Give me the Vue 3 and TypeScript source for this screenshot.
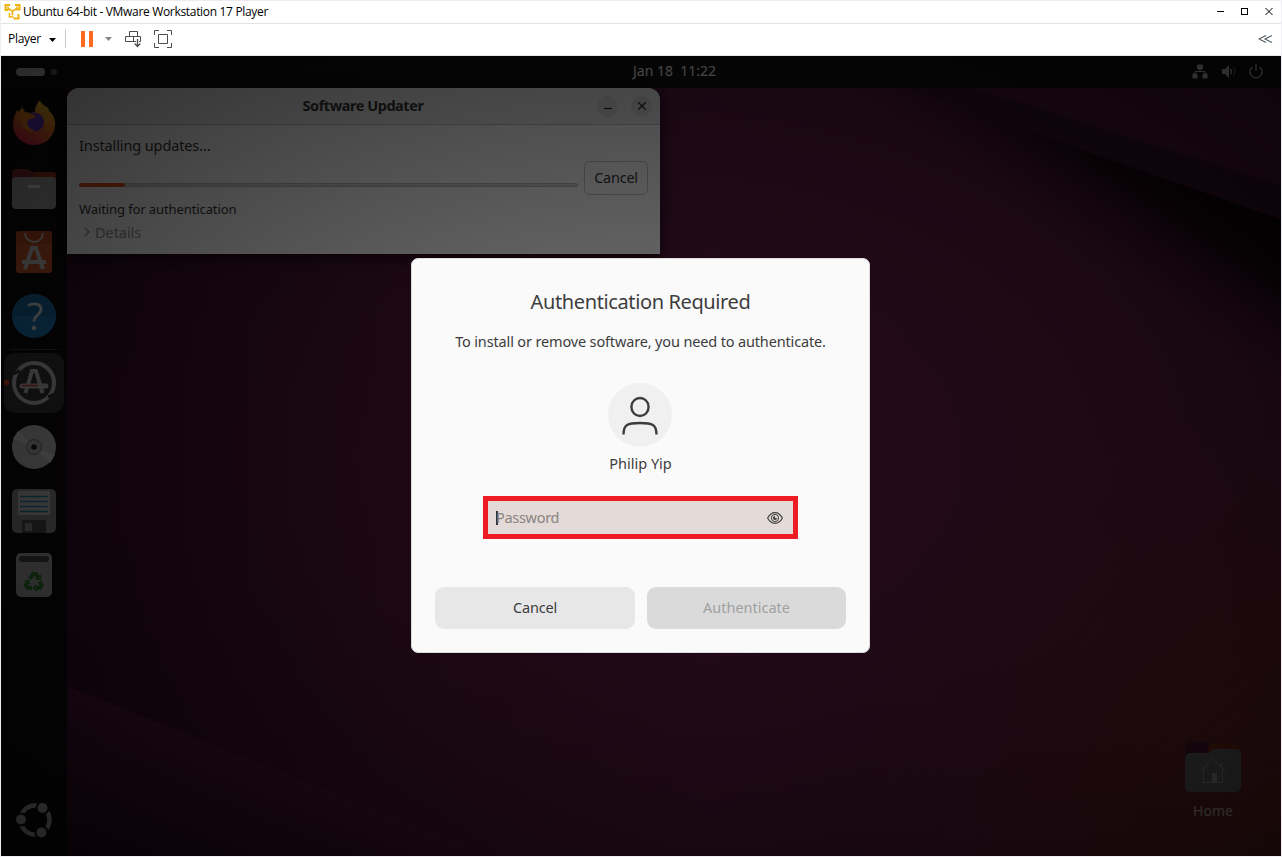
<script setup lang="ts">
interface DockItem {
  id: string
  active?: boolean
}
const pinned: DockItem[] = [{ id: 'firefox' }, { id: 'files' }, { id: 'store' }, { id: 'help' }]
const running: DockItem[] = [{ id: 'updater', active: true }, { id: 'disc' }, { id: 'floppy' }, { id: 'trash' }]
const progress = 9.2
</script>

<template>
  <div class="vm">
    <header class="titlebar">
      <svg class="logo" width="17" height="17" viewBox="0 0 17 17" fill="none" stroke="#efb310" stroke-width="2">
        <path d="M6 2H1.500v5H4M11 2h4.500v4.500H13M9.500 15.500h5V11" />
        <path d="M3.500 4.800L7 7.500h3l3.500-3M8.500 7.500v5M5.500 10v4h4M4 3.500v3h2.500M13 3.500v3h-2.500" stroke-width="1.600" />
      </svg>
      <span class="caption">Ubuntu 64-bit - VMware Workstation 17 Player</span>
      <svg class="controls" width="54" height="9" viewBox="0 0 54 9" fill="none" stroke="#000" shape-rendering="crispEdges">
        <path d="M0 4.500h7M24.500 1.500h6v6h-6z" />
        <path d="M48.500 1l7 7M55.500 1l-7 7" shape-rendering="auto" />
      </svg>
    </header>

    <div class="toolbar">
      <span class="player">Player</span>
      <svg class="caret" width="7" height="4" viewBox="0 0 7 4"><path d="M0 0h7L3.500 4z" fill="#000" /></svg>
      <i class="divider"></i>
      <svg class="pause" width="12" height="16" viewBox="0 0 12 16"><path d="M0 0h4v16H0zM8 0h4v16H8z" fill="#ff6a1f" /></svg>
      <svg class="caret2" width="7" height="4" viewBox="0 0 7 4"><path d="M0 0h7L3.500 4z" fill="#888" /></svg>
      <svg class="cad" width="18" height="18" viewBox="0 0 18 18" fill="none" stroke="#4c4c4c">
        <path d="M4.500 6.500v-5h8v5M.5 6.500h15v5M9.500 11.500H.5v-5M8.500 6.500v5M9 11.500h2M14 11.500h1.500" />
        <path d="M12.500 9v7.500M9.700 13.500l2.800 3 2.800-3" stroke-width="1.300" />
      </svg>
      <svg class="full" width="18" height="18" viewBox="0 0 18 18" fill="none" stroke="#4c4c4c">
        <path d="M.5 5V.5H5M13 .5h4.500V5M17.500 13v4.500H13M5 17.500H.5V13M4.500 4.500h9v9h-9z" />
      </svg>
      <svg class="chev" width="15" height="8" viewBox="0 0 15 8" fill="none" stroke="#4f5a62" stroke-width="1.100">
        <path d="M8 .5L1 4l7 3.500M14 .5L7 4l7 3.500" />
      </svg>
    </div>

    <main class="desktop">
      <svg class="wallpaper" width="1280" height="800" viewBox="0 0 1280 800" preserveAspectRatio="none">
        <defs>
          <linearGradient id="base" x1="0" y1="0" x2="1" y2="0">
            <stop offset="0" stop-color="#2b0820" /><stop offset=".3" stop-color="#47142f" />
            <stop offset=".55" stop-color="#55183d" /><stop offset="1" stop-color="#541838" />
          </linearGradient>
          <radialGradient id="warm" gradientUnits="userSpaceOnUse" cx="1280" cy="760" r="420">
            <stop offset="0" stop-color="#8a3018" stop-opacity=".6" /><stop offset="1" stop-color="#7a2824" stop-opacity="0" />
          </radialGradient>
          <linearGradient id="foldTop" gradientUnits="userSpaceOnUse" x1="1150" y1="80" x2="1070" y2="197">
            <stop offset="0" stop-color="#0c0206" /><stop offset=".35" stop-color="#14040c" stop-opacity=".9" /><stop offset="1" stop-color="#4a1531" stop-opacity="0" />
          </linearGradient>
          <linearGradient id="foldLow" gradientUnits="userSpaceOnUse" x1="276" y1="714" x2="220" y2="850">
            <stop offset="0" stop-color="#4b1437" /><stop offset="1" stop-color="#260a1c" />
          </linearGradient>
        </defs>
        <rect width="1280" height="800" fill="url(#base)" />
        <rect width="1280" height="800" fill="url(#warm)" />
        <path d="M840 32H904L1280 163V350z" fill="url(#foldTop)" />
        <path d="M904 32H1280V163z" fill="#35102a" />
        <path d="M972 32h308v97z" fill="#4a1632" />
        <path d="M66 630L489 800H66z" fill="url(#foldLow)" />
      </svg>

      <nav class="topbar">
        <i class="pill"></i><i class="dot"></i>
        <span class="clock">Jan 18&nbsp; 11:22</span>
        <svg class="tray" width="72" height="16" viewBox="0 0 72 16" fill="none" stroke="#ddd">
          <path d="M5.500 1h5v4h-5zM1 10h4v4H1zM11 10h4v4h-4z" fill="#ddd" />
          <path d="M8 5v3M3 11V7.500h10V11" />
          <path d="M30 5h3l4-4v13l-4-4h-3z" fill="#ddd" stroke="none" />
          <path d="M38.500 5q2 2.500 0 5" stroke-width="1.300" /><path d="M41 3q4 4.500 0 9" opacity=".6" />
          <path d="M60.500 3a6 6 0 1 0 7 0M64 0v7" stroke-width="1.400" />
        </svg>
      </nav>

      <aside class="dock">
        <template v-for="(group, g) in [pinned, running]" :key="g">
          <div v-if="g === 1" class="sep"></div>
          <div v-for="item in group" :key="item.id" class="slot">
            <div class="tile" :class="{ active: item.active }">
              <svg width="46" height="46" viewBox="0 0 46 46">
                <template v-if="item.id === 'firefox'">
                  <defs>
                    <linearGradient id="fx" x1=".8" y1="0" x2=".3" y2="1">
                      <stop offset="0" stop-color="#ffd83a" /><stop offset=".45" stop-color="#ff8a20" /><stop offset="1" stop-color="#e3204f" />
                    </linearGradient>
                  </defs>
                  <g transform="translate(0 -1)">
                    <path d="M29 0c1 4 5 6 8 8l1 3c4 3 7 9 6 15-1 11-10 19-21 19S2 36 2 25c0-6 2-11 4-15l2 2 3-5 3 5 6 1 4-1c0-5 2-9 5-12z" fill="url(#fx)" />
                    <circle cx="23.500" cy="22" r="9.500" fill="#6a35c9" />
                    <path d="M9 15c6-2 11-2 16 1-2 3-5 2-8 4-2 4 1 10 7 10-7 4-15-2-15-15z" fill="#ff8a20" />
                  </g>
                </template>
                <template v-else-if="item.id === 'files'">
                  <path d="M1 8a4 4 0 0 1 4-4h12l5 3h19a4 4 0 0 1 4 4v8H1z" fill="#8a2a2c" />
                  <path d="M24 7h17a4 4 0 0 1 4 4v8H22z" fill="#a5361b" />
                  <rect x="1" y="12" width="44" height="32" rx="4" fill="#a6a6a6" /><rect x="17" y="20" width="12" height="3" rx="1.500" fill="#eee" />
                </template>
                <template v-else-if="item.id === 'store'">
                  <rect x="5" y="2" width="36" height="42" rx="3" fill="#d0562a" /><path d="M5 5a3 3 0 0 1 3-3h30a3 3 0 0 1 3 3v10H5z" fill="#bf4a20" />
                  <path d="M14 4a9 9 0 0 0 18 0" fill="none" stroke="#ccc" stroke-width="1.800" />
                  <path d="M14 40l7-21h4l7 21M11 33h24" fill="none" stroke="#ccc" stroke-width="4" />
                </template>
                <template v-else-if="item.id === 'help'">
                  <circle cx="23" cy="23" r="22" fill="#1d78b8" /><path d="M1 23a22 22 0 0 1 44 0z" fill="#1769a4" />
                  <path d="M17 12.500c5-2.500 13-2.500 13 3.500s-7 6-7 12.500" fill="none" stroke="#dcdcdc" stroke-width="2.800" /><circle cx="23" cy="35" r="2.300" fill="#dcdcdc" />
                </template>
                <template v-else-if="item.id === 'updater'">
                  <circle cx="23" cy="23" r="20" fill="#343434" stroke="#bdbdbd" stroke-width="4" />
                  <path d="M3 14l6 -3.500M37 37l7-3" stroke="#333" stroke-width="3" />
                  <path d="M14.500 33l6.500-22h4l6.500 22" fill="none" stroke="#bdbdbd" stroke-width="4" />
                  <path d="M11 26h24" stroke="#bdbdbd" stroke-width="5" stroke-linecap="round" /><path d="M11 25.500h16" stroke="#c63a35" stroke-width="1.500" />
                </template>
                <template v-else-if="item.id === 'disc'">
                  <circle cx="23" cy="23" r="22" fill="#b8b8b8" /><path d="M23 23L2 15l5-8zM23 23l21 8-5 8z" fill="#cdcdcd" />
                  <circle cx="23" cy="23" r="7.500" fill="#b1ada6" stroke="#77736b" /><circle cx="23" cy="23" r="3.500" fill="#222" stroke="#ccc" stroke-width="1" />
                </template>
                <template v-else-if="item.id === 'floppy'">
                  <rect x="1" y="1" width="44" height="44" rx="5" fill="#858585" /><rect x="7" y="3" width="32" height="24" rx="1" fill="#bbb" />
                  <path d="M9 8.500h28M9 13.500h28M9 18.500h28M9 23.500h28" stroke="#217b9a" stroke-width="1.300" />
                  <path d="M11 45V33a1 1 0 0 1 1-1h22a1 1 0 0 1 1 1v12z" fill="#494949" /><rect x="14" y="35" width="7" height="8" fill="#8c8c8c" />
                </template>
                <template v-else>
                  <rect x="5" y="1" width="36" height="44" rx="5" fill="#a0a0a0" /><rect x="8" y="4" width="30" height="6" rx="3" fill="#474747" />
                  <g fill="none" stroke="#2c7a2c" stroke-width="4">
                    <path d="M19 27l3-5h3l2.500 4" /><path d="M28.500 29.500l2 3.500-1.500 3h-4.500M21 36h-4.500l-1.500-3 2-3.500" />
                    <path d="M29.500 23v4H25M25.500 33l-3 3 3 3M14 29.500l3.500-.8 1 3.500" stroke-width="1.800" />
                  </g>
                </template>
              </svg>
            </div>
          </div>
        </template>
        <svg class="ubuntu" width="40" height="40" viewBox="0 0 40 40">
          <circle cx="20" cy="20" r="14.500" fill="none" stroke="#b9b9b9" stroke-width="4.500" />
          <g fill="#b9b9b9" stroke="#0f0a0d" stroke-width="2">
            <circle cx="6" cy="19.500" r="6" /><circle cx="27.500" cy="8" r="6" /><circle cx="26.500" cy="32.500" r="6" />
          </g>
        </svg>
      </aside>

      <section class="window">
        <div class="whead">
          <h1>Software Updater</h1>
          <div class="wbtns">
            <span class="wbtn"><svg width="10" height="10" viewBox="0 0 10 10"><path d="M1 7.500h8" stroke="#2b2b2b" stroke-width="1.200" /></svg></span>
            <span class="wbtn"><svg width="10" height="10" viewBox="0 0 10 10"><path d="M1.200 1.200l7.600 7.600M8.800 1.200L1.200 8.800" stroke="#2b2b2b" stroke-width="1.300" /></svg></span>
          </div>
        </div>
        <div class="wbody">
          <p class="installing">Installing updates…</p>
          <div class="prow">
            <div class="track"><div class="bar" :style="{ width: progress + '%' }"></div></div>
            <button class="wcancel">Cancel</button>
          </div>
          <p class="waiting">Waiting for authentication</p>
          <p class="details">
            <svg width="6" height="10" viewBox="0 0 6 10"><path d="M.8.8L5 5 .8 9.200" fill="none" stroke="#888" stroke-width="1.200" /></svg>
            <span>Details</span>
          </p>
        </div>
      </section>

      <div class="home">
        <svg width="56" height="52" viewBox="0 0 56 52">
          <path d="M0 8a6 6 0 0 1 6-6h16l5 3v20H0z" fill="#4a1230" /><path d="M24 4h27a5 5 0 0 1 5 5v12H20z" fill="#7c2a16" />
          <path d="M0 18a5 5 0 0 1 5-5h17q2 0 4-2t4-2h21a5 5 0 0 1 5 5v33a5 5 0 0 1-5 5H5a5 5 0 0 1-5-5z" fill="#696969" />
          <path d="M15.500 31.500L28 18.500l12.500 13M18.500 29v13.500h19V29M36.500 23.500v3" fill="none" stroke="#a4a4a4" /><path d="M27 42v-9h5v9z" fill="#a4a4a4" />
        </svg>
        <span>Home</span>
      </div>

      <div class="scrim"></div>

      <section class="dialog">
        <h2>Authentication Required</h2>
        <p class="msg">To install or remove software, you need to authenticate.</p>
        <div class="avatar">
          <svg width="38" height="40" viewBox="0 0 38 40" fill="none" stroke="#3d3d3d" stroke-width="2.400">
            <rect x="10.500" y="3" width="17" height="18" rx="8.500" /><path d="M2.500 39.500c0-10 4-11.500 16.500-11.500s16.500 1.500 16.500 11.500" />
          </svg>
        </div>
        <p class="name">Philip Yip</p>
        <div class="field">
          <i class="cursor"></i><span class="ph">Password</span>
          <svg width="16" height="12" viewBox="0 0 16 12" fill="none" stroke="#3d3d3d">
            <path d="M.6 6C2.500 2.500 5 .6 8 .6S13.500 2.500 15.400 6C13.500 9.500 11 11.400 8 11.400S2.500 9.500.6 6z" stroke-width="1.100" />
            <circle cx="8" cy="6" r="3.600" /><path d="M8 4v2h2A2 2 0 1 1 8 4z" fill="#3d3d3d" stroke="none" />
          </svg>
        </div>
        <div class="actions">
          <button>Cancel</button><button class="off" disabled>Authenticate</button>
        </div>
      </section>
    </main>
  </div>
</template>

<style>
html, body { margin: 0; background: #fff; overflow: hidden; }
</style>

<style scoped>
* { box-sizing: border-box; }
p, h1, h2 { margin: 0; font-weight: 400; }
svg { display: block; flex: none; }
i { display: block; flex: none; }
button { border: 0; font: inherit; padding: 0; }
.vm { width: 1282px; height: 857px; background: #f0f0f2; padding: 0 1px 1px; display: flex; flex-direction: column; font-family: "Noto Sans", "Open Sans", sans-serif; }
.titlebar { height: 24px; background: #fff; border-top: 1px solid #ececf0; border-bottom: 1px solid #e2e2e2; display: flex; align-items: center; padding: 0 10px 1px 3px; }
.caption { font-family: "Open Sans", sans-serif; font-size: 12px; letter-spacing: -.32px; color: #000; margin-left: 2px; white-space: nowrap; }
.controls { margin-left: auto; overflow: visible; }
.toolbar { height: 32px; background: #fff; border-bottom: 1px solid #e8e8e8; display: flex; align-items: center; padding: 0 8px 2px 7px; }
.player { font-family: "Open Sans", sans-serif; font-size: 12px; letter-spacing: -.3px; width: 34px; }
.caret { margin-left: 7px; margin-top: 2px; }
.divider { width: 1px; height: 19px; background: #ccc; margin-left: 9px; }
.pause { margin-left: 15px; }
.caret2 { margin-left: 12px; }
.cad { margin-left: 13px; }
.full { margin-left: 11px; }
.chev { margin-left: auto; }
.desktop { position: relative; height: 800px; overflow: hidden; display: grid; grid-template: 32px 1fr / 66px 1fr; background: #2b0820; }
.wallpaper { position: absolute; inset: 0; }
.topbar { grid-column: 1 / 3; position: relative; background: #101010; display: grid; grid-template-columns: 29px 6px 1fr auto; align-items: center; column-gap: 6px; padding: 0 17px 0 15px; }
.pill { width: 29px; height: 8px; border-radius: 4px; background: #dedede; }
.dot { width: 6px; height: 6px; border-radius: 50%; background: #707070; }
.clock { color: #efefef; font-size: 14px; line-height: 20px; letter-spacing: 0; text-align: center; margin: -2px 0 0 100px; white-space: nowrap; }
.tray { overflow: visible; }
.dock { position: relative; background: #0f0a0d; display: flex; flex-direction: column; align-items: center; padding-top: 4px; }
.slot { height: 64px; display: flex; align-items: center; }
.tile { width: 60px; height: 60px; display: grid; place-items: center; border-radius: 11px; position: relative; }
.tile.active { background: #333; }
.tile.active::before { content: ""; position: absolute; left: 0; top: 27px; width: 5px; height: 5px; border-radius: 50%; background: #d9480f; }
.sep { height: 3px; width: 48px; background: linear-gradient(#3a3a3a, #3a3a3a) 0 1px / 100% 1px no-repeat; }
.ubuntu { margin: auto 0 16px 1px; }
.window { position: absolute; left: 66px; top: 32px; width: 593px; height: 166px; border-radius: 12px 12px 0 0; background: #fafafa; box-shadow: 0 3px 12px 3px rgba(0, 0, 0, .55); color: #353535; }
.whead { height: 37px; border-bottom: 1px solid #bdbdbd; background: #ebebeb; border-radius: 12px 12px 0 0; display: grid; grid-template-columns: 1fr auto; align-items: center; padding-right: 8px; }
.whead h1 { font-size: 14.500px; font-weight: 700; letter-spacing: -.45px; text-align: center; padding: 0 0 2px 62px; line-height: 20px; }
.wbtns { display: flex; gap: 13px; }
.wbtn { width: 21px; height: 21px; border-radius: 50%; background: #dadada; display: grid; place-items: center; }
.wbody { padding: 10px 12px 0; display: flex; flex-direction: column; }
.installing { font-size: 14.500px; line-height: 20px; letter-spacing: -.12px; }
.prow { display: flex; align-items: center; gap: 6px; margin-top: 6px; height: 34px; }
.track { flex: 1; height: 4px; margin-top: 13px; background: #d2d2d2; border: 1px solid #bcbcbc; border-radius: 2px; }
.bar { height: 4px; margin: -1px; background: #e2501a; border-radius: 2px; }
.wcancel { width: 64px; height: 34px; border: 1px solid #c2c2c2; border-radius: 6px; background: transparent; font-size: 14.500px; letter-spacing: -.25px; color: #353535; padding-bottom: 2px; }
.waiting { font-size: 13px; line-height: 18px; margin-top: 5px; letter-spacing: -.1px; }
.details { display: flex; align-items: center; gap: 5px; font-size: 14.500px; line-height: 20px; color: #929292; margin: 4px 0 0 5px; letter-spacing: -.05px; }
.home { position: absolute; left: 1184px; top: 684px; width: 56px; display: flex; flex-direction: column; align-items: center; gap: 9px; color: #ccc; font-size: 14px; line-height: 20px; }
.scrim { position: absolute; inset: 0; background: radial-gradient(ellipse farthest-corner at center, rgba(0, 0, 0, .55) 0, rgba(0, 0, 0, .61) 35%, rgba(0, 0, 0, .72) 72%, rgba(0, 0, 0, .78) 90%, rgba(0, 0, 0, .82) 100%); }
.dialog { position: absolute; left: 410px; top: 202px; width: 459px; height: 395px; border: 1px solid #dcdcdc; border-radius: 7px; background: #fafafa; color: #3d3d3d; display: flex; flex-direction: column; align-items: center; padding: 28px 23px 23px; font-size: 14.500px; }
.dialog h2 { font-size: 20px; line-height: 30px; letter-spacing: -.38px; white-space: nowrap; }
.msg { line-height: 20px; margin-top: 14px; letter-spacing: -.15px; white-space: nowrap; }
.avatar { width: 64px; height: 64px; border-radius: 50%; background: #f0f0f0; display: grid; place-items: center; margin: 32px 1px 0 0; }
.name { line-height: 20px; margin-top: 6px; letter-spacing: 0; }
.field { width: 315px; height: 43px; border: 5px solid #ed1c24; background: #e4dad7; margin-top: 23px; display: flex; align-items: center; padding: 0 10px 0 8px; color: #8a8381; }
.cursor { width: 2px; height: 14px; background: #333; }
.ph { flex: 1; letter-spacing: -.3px; margin-left: -2px; padding-bottom: 2px; }
.actions { align-self: stretch; margin-top: auto; display: grid; grid-template-columns: 200px 199px; gap: 12px; height: 42px; }
.actions button { border-radius: 9px; background: #e7e7e7; color: #3d3d3d; letter-spacing: -.22px; padding-bottom: 2px; }
.actions .off { background: #dadada; color: #a0a0a0; letter-spacing: 0; }
</style>
